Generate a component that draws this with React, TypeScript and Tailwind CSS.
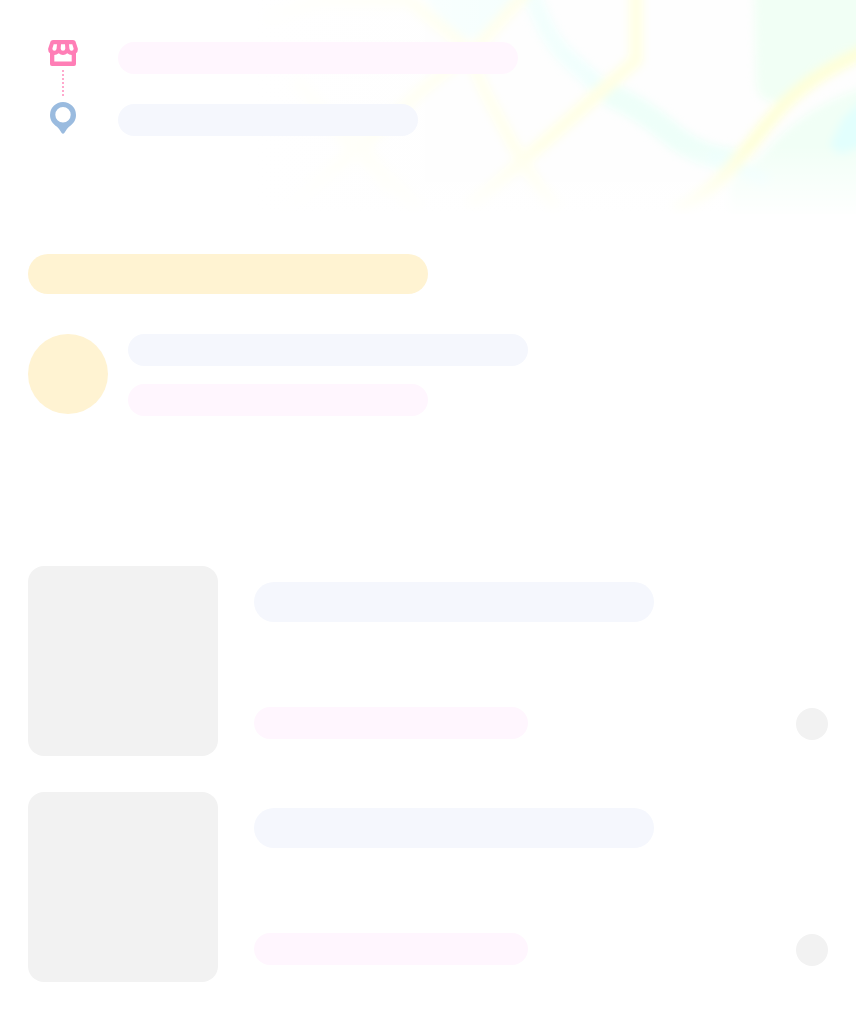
function MapBackdrop() {
  return (
    <svg className="absolute inset-0 h-full w-full" viewBox="0 0 856 214" fill="none" aria-hidden="true">
      <defs>
        <filter id="soft" x="-10%" y="-20%" width="120%" height="140%" colorInterpolationFilters="sRGB">
          <feGaussianBlur stdDeviation="4" />
        </filter>
        <linearGradient id="fadeX" x1="250" x2="600" y1="0" y2="0" gradientUnits="userSpaceOnUse">
          <stop offset="0" stopColor="#fff" />
          <stop offset="0.35" stopColor="#fff" stopOpacity="0.65" />
          <stop offset="1" stopColor="#fff" stopOpacity="0" />
        </linearGradient>
        <linearGradient id="fadeY" x1="0" x2="0" y1="145" y2="218" gradientUnits="userSpaceOnUse">
          <stop offset="0" stopColor="#fff" stopOpacity="0" />
          <stop offset="1" stopColor="#fff" />
        </linearGradient>
      </defs>
      <rect x="256" width="600" height="212" fill="#fefefe" />
      <g filter="url(#soft)">
        <path d="M754-20H880V40C830 55 805 75 782 101H768Q757 98 756 80Z" fill="#f1fff5" />
        <path d="M880 82C820 99 788 125 765 152L730 185V240H880Z" fill="#f1fff6" />
        <path d="M872 92L843 118L830 145L840 155L872 142Z" fill="#e2fffd" />
        <path d="M420-10H526L484 38H454Z" fill="#f2fffd" />
        <path d="M530-10C545 30 553 45 572 62L610 96" stroke="#f0fffd" strokeWidth="18" />
        <path d="M608 94Q640 107 670 133T735 160" stroke="#eefff9" strokeWidth="24" />
        <path d="M710 156L768 182" stroke="#ecfffc" strokeWidth="15" />
        <path d="M396-10L462 44Q474 65 484 90L522 162L556 210" stroke="#ffffe9" strokeWidth="13" />
        <path d="M528-10L480 44L420 92L365 143L280 215" stroke="#ffffe8" strokeWidth="13" />
        <path d="M260 20L320 0H410M295 80L350 145L420 210M350 130L390 190" stroke="#ffffed" strokeWidth="15" />
        <path d="M636-20V60L522 162L470 206" stroke="#ffffe5" strokeWidth="14" strokeLinejoin="round" />
        <path d="M870 49C810 76 788 98 766 125S724 186 676 212" stroke="#feffda" strokeWidth="14" />
      </g>
      <path d="M0 0H856V214H0Z" fill="url(#fadeX)" />
      <path d="M0 145H856V214H0Z" fill="url(#fadeY)" />
    </svg>
  );
}

function StoreIcon() {
  return (
    <svg className="block h-[26px] w-[30px]" viewBox="0 0 30 26" aria-hidden="true">
      <path
        fill="#ff7eb6"
        fillRule="evenodd"
        d="M5 0H25Q27 0 27.5 1.5L29.8 8.5Q30.2 11.5 28 13.3V24Q28 26 26 26H4Q2 26 2 24V13.3Q-.2 11.5 .2 8.5L2.5 1.5Q3 0 5 0ZM5.7 4.3L4.4 8.4Q4.2 10.8 6.4 10.8Q8.4 10.8 8.6 8.6L9 4.3ZM13 4.3L12.7 8.6Q12.8 10.8 15 10.8Q17.2 10.8 17.3 8.6L17 4.3ZM21 4.3L21.4 8.6Q21.6 10.8 23.6 10.8Q25.8 10.8 25.6 8.4L24.3 4.3ZM6.3 15V21.6H23.7V15Q21.2 15 19.3 13.2Q17.5 15 15 15Q12.5 15 10.7 13.2Q8.8 15 6.3 15Z"
      />
    </svg>
  );
}

function PinIcon() {
  return (
    <svg className="block h-8 w-[26px]" viewBox="0 0 26 32" aria-hidden="true">
      <path
        fill="#9abbdf"
        fillRule="evenodd"
        d="M13 0A13 13 0 0 0 0 13C0 18.5 3 22 7 24.8Q9.5 27 11.5 30.8Q13 32.8 14.5 30.8Q16.5 27 19 24.8C23 22 26 18.5 26 13A13 13 0 0 0 13 0ZM13 5A7.7 7.7 0 1 1 13 20.4A7.7 7.7 0 0 1 13 5Z"
      />
    </svg>
  );
}

function RouteDots() {
  return (
    <svg className="block h-[26px] w-0.5" viewBox="0 0 2 26" aria-hidden="true">
      <path d="M1 0V26" stroke="#ffa9cd" strokeWidth="2" strokeDasharray="2 2" />
    </svg>
  );
}

function ProductRow() {
  return (
    <div className="flex h-[190px]">
      <div className="w-[190px] rounded-2xl bg-[#f2f2f2]" />
      <div className="ml-9 flex flex-1 flex-col justify-between pt-4 pb-[17px]">
        <div className="h-10 w-[400px] rounded-full bg-[#f5f7fd]" />
        <div className="h-8 w-[274px] rounded-full bg-[#fff6fe]" />
      </div>
      <div className="mb-4 size-8 self-end rounded-full bg-[#f2f2f2]" />
    </div>
  );
}

export default function App() {
  return (
    <main className="h-[1018px] w-[856px] overflow-hidden bg-white">
      <header className="relative h-[214px]">
        <MapBackdrop />
        <div className="relative flex pt-10 pl-12">
          <div className="flex w-[30px] flex-col items-center">
            <StoreIcon />
            <div className="pt-1 pb-[6px]">
              <RouteDots />
            </div>
            <PinIcon />
          </div>
          <div className="ml-10 flex flex-col gap-[30px] pt-0.5">
            <div className="h-8 w-[400px] rounded-full bg-[#fff6fe]" />
            <div className="h-8 w-[300px] rounded-full bg-[#f5f7fd]" />
          </div>
        </div>
      </header>
      <section className="px-7 pt-10">
        <div className="h-10 w-[400px] rounded-full bg-[#fff3d2]" />
        <div className="mt-10 flex gap-5">
          <div className="size-20 rounded-full bg-[#fff3d2]" />
          <div className="flex flex-col gap-[18px]">
            <div className="h-8 w-[400px] rounded-full bg-[#f5f7fd]" />
            <div className="h-8 w-[300px] rounded-full bg-[#fff6fe]" />
          </div>
        </div>
      </section>
      <section className="flex flex-col gap-9 px-7 pt-[150px]">
        <ProductRow />
        <ProductRow />
      </section>
    </main>
  );
}
